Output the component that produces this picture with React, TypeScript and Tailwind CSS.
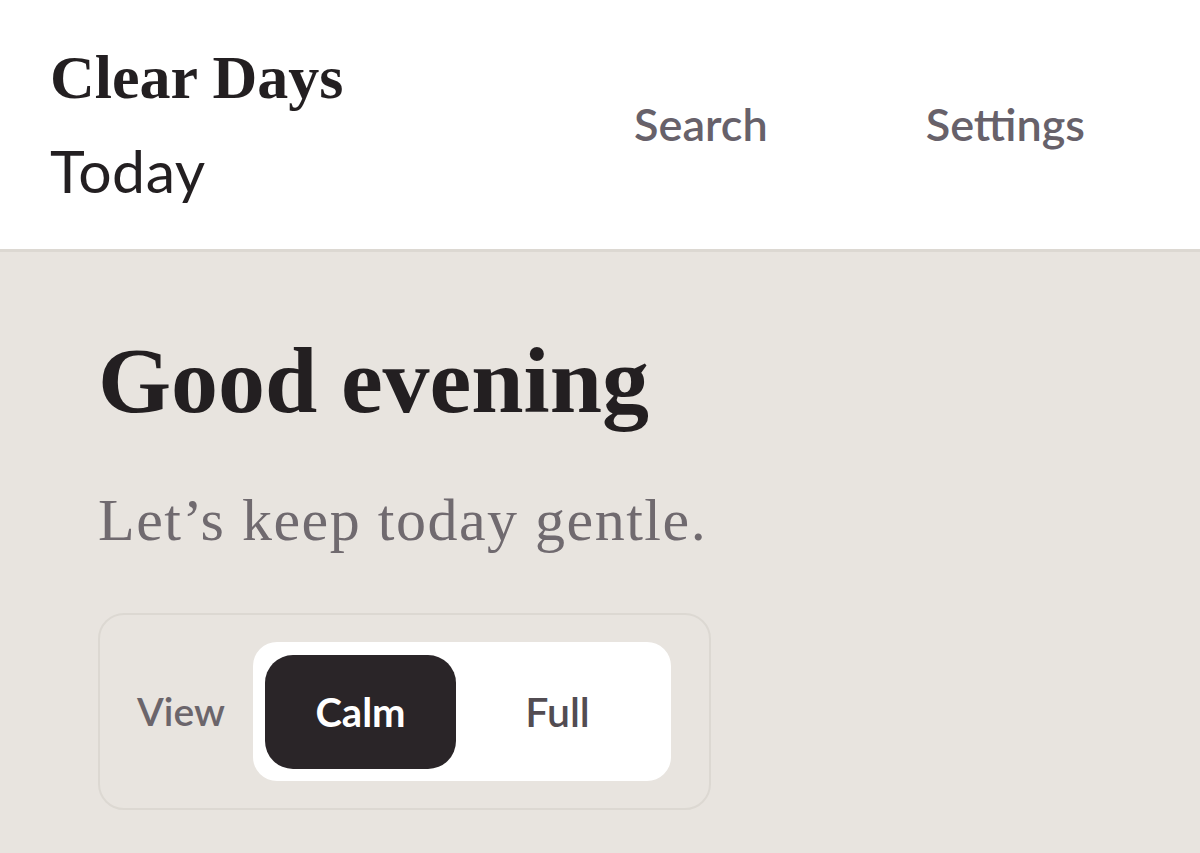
import React from "react";

export default function App() {
  const serif = { fontFamily: '"Liberation Serif", "Times New Roman", serif' };
  return (
    <div className="min-h-[853px] w-full bg-[#e8e4df] text-[#262124]" style={{ fontFamily: 'Lato, "Open Sans", sans-serif' }}>
      <header className="h-[252px] bg-white border-b-[3px] border-[#dcd8d2] flex items-start justify-between pl-[50px] pr-[115px]">
        <div className="pt-[41px] flex flex-col">
          <div className="text-[62px] leading-[72px] font-bold text-[#231f21]" style={serif}>Clear Days</div>
          <div className="mt-[24px] text-[59px] leading-[67px] tracking-[0.5px] text-[#231f21]">Today</div>
        </div>
        <nav className="flex items-center gap-[158px] h-[249px]">
          <a className="text-[45px] font-semibold text-[#67616a] cursor-pointer">Search</a>
          <a className="text-[45px] font-semibold text-[#67616a] cursor-pointer">Settings</a>
        </nav>
      </header>
      <main className="pl-[98px] pt-[78px] pb-[40px]">
        <h1 className="text-[94px] leading-[101px] font-bold text-[#231f21]" style={serif}>Good evening</h1>
        <p className="mt-[56px] text-[60px] leading-[66px] tracking-[1.5px] text-[#706a6f]" style={serif}>Let’s keep today gentle.</p>
        <div className="mt-[60px] w-[613px] h-[197px] rounded-[26px] border-2 border-[#dcd8d2] flex items-center pl-[37px]">
          <span className="text-[39px] font-semibold text-[#6b656b] w-[116px]">View</span>
          <div className="bg-white rounded-[24px] h-[139px] w-[418px] flex items-center px-[12px]">
            <button className="bg-[#2a2528] text-white rounded-[28px] h-[114px] w-[191px] text-[40px] font-bold">Calm</button>
            <button className="flex-1 h-[114px] text-[41px] font-semibold text-[#524c52]">Full</button>
          </div>
        </div>
      </main>
    </div>
  );
}
